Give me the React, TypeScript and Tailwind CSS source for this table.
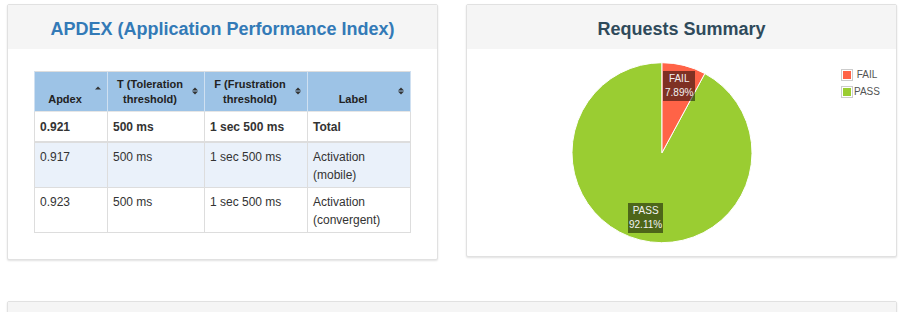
import React from 'react'

const rows = [
  { apdex: '0.921', t: '500 ms', f: '1 sec 500 ms', label: 'Total', total: true },
  { apdex: '0.917', t: '500 ms', f: '1 sec 500 ms', label: 'Activation (mobile)', total: false },
  { apdex: '0.923', t: '500 ms', f: '1 sec 500 ms', label: 'Activation (convergent)', total: false },
]

// sort icons like datatables
function SortAsc() {
  return (
    <svg width="6" height="8" viewBox="0 0 6 8" className="absolute right-[6px] top-[14px]">
      <path d="M0 3.5 L3 0.5 L6 3.5 Z" fill="#333" />
    </svg>
  )
}

function SortBoth() {
  return (
    <svg width="6" height="8" viewBox="0 0 6 8" className="absolute right-[6px] top-[15px]">
      <path d="M0 3.5 L3 0.5 L6 3.5 Z" fill="#333" />
      <path d="M0 4.5 L3 7.5 L6 4.5 Z" fill="#333" />
    </svg>
  )
}

function Panel({ title, titleClass, children }: { title?: string; titleClass?: string; children?: React.ReactNode }) {
  return (
    <div className="bg-white border border-[#e1e1e1] rounded-[2px] shadow-[0_1px_2px_rgba(0,0,0,0.12)]">
      <div className="h-[44px] bg-[#f5f5f5] flex items-center justify-center pt-[4px]">
        {title && <h2 className={`text-[18px] font-bold leading-none ${titleClass}`}>{title}</h2>}
      </div>
      {children}
    </div>
  )
}

function ApdexTable() {
  const th = 'relative align-bottom text-center font-bold text-[11px] leading-[15px] text-[#222] pl-[5px] pr-[17px] pt-[5px] pb-[4px] border-x border-[#cfe0f1] bg-[#9dc3e6]'
  return (
    <table className="w-[376px] border-collapse border border-[#ddd] table-fixed">
      <colgroup>
        <col className="w-[73px]" />
        <col className="w-[97px]" />
        <col className="w-[103px]" />
        <col className="w-[103px]" />
      </colgroup>
      <thead>
        <tr className="h-[38px] border-b border-[#e6e6e6]">
          <th className={th}>
            Apdex
            <SortAsc />
          </th>
          <th className={th}>
            T (Toleration threshold)
            <SortBoth />
          </th>
          <th className={th}>
            F (Frustration threshold)
            <SortBoth />
          </th>
          <th className={th}>
            Label
            <SortBoth />
          </th>
        </tr>
      </thead>
      <tbody className="text-[12px] text-[#333]">
        {rows.map((r, i) => (
          <tr
            key={i}
            className={
              r.total
                ? 'font-bold border-b-2 border-[#ddd]'
                : i === 1
                ? 'bg-[#eaf1fa] border-b border-[#ddd]'
                : 'bg-white border-b border-[#ddd]'
            }
          >
            {[r.apdex, r.t, r.f, r.label].map((v, j) => (
              <td
                key={j}
                className={`align-top px-[5px] border-x border-[#ddd] ${
                  r.total ? 'pt-[7px] pb-[5px] leading-[17px]' : 'pt-[5px] pb-[3px] leading-[18px]'
                }`}
              >
                {v}
              </td>
            ))}
          </tr>
        ))}
      </tbody>
    </table>
  )
}

function PieChart() {
  const cx = 195
  const cy = 103.7
  const r = 90
  const failPct = 7.89
  const a = (failPct / 100) * Math.PI * 2
  const x1 = cx + r * Math.sin(a)
  const y1 = cy - r * Math.cos(a)

  return (
    <div className="relative h-[207px]">
      <svg width="429" height="207" viewBox="0 0 429 207" className="block">
        <path d={`M${cx} ${cy} L${x1} ${y1} A${r} ${r} 0 1 1 ${cx} ${cy - r} Z`} fill="#9acd32" stroke="#fff" strokeWidth="1" strokeLinejoin="round" />
        <path d={`M${cx} ${cy} L${cx} ${cy - r} A${r} ${r} 0 0 1 ${x1} ${y1} Z`} fill="#ff6347" stroke="#fff" strokeWidth="1" strokeLinejoin="round" />
      </svg>

      {/* slice labels */}
      <div className="absolute left-[196px] top-[22px] bg-black/50 px-[2px] py-[1px] text-center text-[10px] leading-[14px] text-[#f2f2f2]" style={{ fontFamily: '"Liberation Sans", Arial, sans-serif' }}>
        FAIL
        <br />
        7.89%
      </div>
      <div className="absolute left-[161px] top-[154px] bg-black/50 px-[1px] py-[1px] text-center text-[10px] leading-[14px] text-[#f2f2f2]">
        PASS
        <br />
        92.11%
      </div>

      {/* legend */}
      <div className="absolute left-[374px] top-[20px] flex flex-col gap-[5px] text-[10px] leading-[10px] text-[#545454]">
        <div className="flex items-center">
          <div className="border border-[#ccc] p-[1px]">
            <div className="w-[8px] h-[8px] bg-[#ff6347]" />
          </div>
          <span className="whitespace-pre ml-[1px]"> FAIL</span>
        </div>
        <div className="flex items-center">
          <div className="border border-[#ccc] p-[1px]">
            <div className="w-[8px] h-[8px] bg-[#9acd32]" />
          </div>
          <span className="ml-[1px]">PASS</span>
        </div>
      </div>
    </div>
  )
}

export default function App() {
  return (
    <div className="w-[908px] h-[312px] overflow-hidden bg-white pt-[4px] pl-[7px] pr-[11px]" style={{ fontFamily: '"Liberation Sans", Arial, sans-serif' }}>
      <div className="grid grid-cols-2 gap-[28px] items-start">
        <Panel title="APDEX (Application Performance Index)" titleClass="text-[#337ab7]">
          <div className="h-[210px] px-[26px] pt-[22px]">
            <ApdexTable />
          </div>
        </Panel>
        <Panel title="Requests Summary" titleClass="text-[#2f4a5b]">
          <PieChart />
        </Panel>
      </div>

      <div className="mt-[41px]">
        <Panel />
      </div>
    </div>
  )
}
